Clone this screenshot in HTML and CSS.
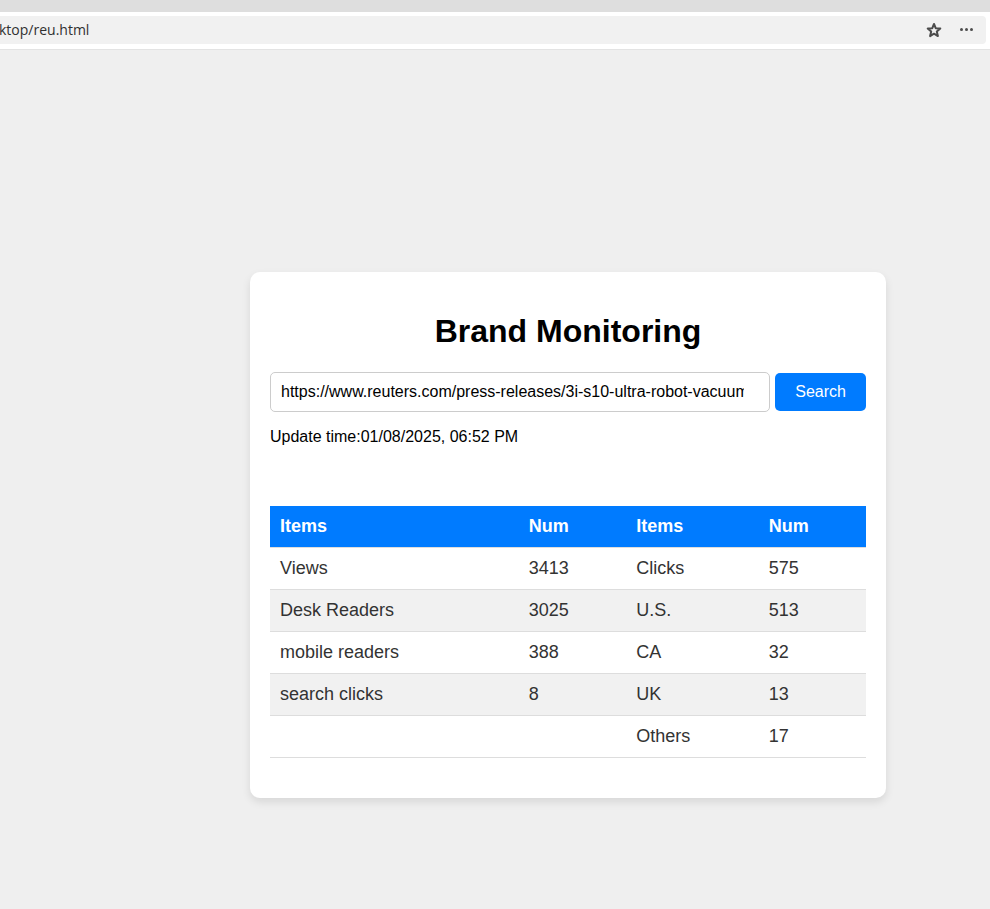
FILE: index.html
```html
<!DOCTYPE html>
<html lang="en">
<head>
  <meta charset="utf-8">
  <title>Brand Monitoring</title>
  <link rel="stylesheet" href="styles.css">
</head>
<body>
  <div class="tab-strip"></div>
  <header class="toolbar">
    <div class="address">
      <span class="address-text">ktop/reu.html</span>
      <button class="icon-button" type="button" aria-label="Add to favorites">
        <svg width="18" height="18" viewBox="0 0 18 18"><path d="M9 3l1.7 4.2 4.6.4-3.5 3 1.1 4.5L9 12.700l-3.900 2.400 1.100-4.500-3.500-3 4.600-.4z" fill="none" stroke="#4c4c4c" stroke-width="2" stroke-linejoin="round"/></svg>
      </button>
      <button class="icon-button" type="button" aria-label="More">
        <svg width="18" height="18" viewBox="0 0 18 18" fill="#4c4c4c"><circle cx="3.500" cy="8.500" r="1.500"/><circle cx="8.500" cy="8.500" r="1.500"/><circle cx="13.500" cy="8.500" r="1.500"/></svg>
      </button>
    </div>
  </header>
  <main class="page">
    <section class="card">
      <h1 class="title">Brand Monitoring</h1>
      <form class="search">
        <input class="search-input" type="text" aria-label="Press release URL" value="https://www.reuters.com/press-releases/3i-s10-ultra-robot-vacuum">
        <button class="search-button" type="button">Search</button>
      </form>
      <p class="updated">Update time:01/08/2025, 06:52 PM</p>
      <table class="stats">
        <thead>
          <tr><th>Items</th><th>Num</th><th>Items</th><th>Num</th></tr>
        </thead>
        <tbody>
          <tr><td>Views</td><td>3413</td><td>Clicks</td><td>575</td></tr>
          <tr><td>Desk Readers</td><td>3025</td><td>U.S.</td><td>513</td></tr>
          <tr><td>mobile readers</td><td>388</td><td>CA</td><td>32</td></tr>
          <tr><td>search clicks</td><td>8</td><td>UK</td><td>13</td></tr>
          <tr><td></td><td></td><td>Others</td><td>17</td></tr>
        </tbody>
      </table>
    </section>
  </main>
</body>
</html>
```
FILE: styles.css
```css
* {
  box-sizing: border-box;
}

body {
  display: flex;
  flex-direction: column;
  min-height: 100vh;
  margin: 0;
  background: #efefef;
  color: #000;
  font-family: "Liberation Sans", Arial, sans-serif;
  font-size: 16px;
}

.tab-strip {
  height: 12px;
  background: #dedede;
}

.toolbar {
  padding: 4px 4px 5px 0;
  background: #fff;
  border-bottom: 1px solid #e3e3e3;
}

.address {
  display: flex;
  align-items: center;
  gap: 15px;
  height: 28px;
  padding-right: 10px;
  background: #f1f1f1;
  border-radius: 0 4px 4px 0;
}

.address-text {
  flex: 1;
  margin-left: -1px;
  padding-bottom: 2px;
  color: #303030;
  font-family: "Open Sans", sans-serif;
  font-size: 14px;
}

.icon-button {
  display: flex;
  padding: 0;
  border: 0;
  background: none;
}

.page {
  padding: 222px 104px 40px 250px;
}

.card {
  padding: 20px 20px 40px;
  background: #fff;
  border-radius: 10px;
  box-shadow: 0 4px 8px rgba(0, 0, 0, 0.1);
}

.title {
  margin: 20px 0 22px;
  font-size: 32px;
  line-height: 38px;
  text-align: center;
}

.search {
  display: flex;
  align-items: center;
  gap: 5px;
}

.search-input {
  flex: 1;
  min-width: 0;
  height: 40px;
  padding: 0 25px 0 10px;
  border: 1px solid #ccc;
  border-radius: 5px;
  background: #fff;
  color: #000;
  font: inherit;
}

.search-button {
  height: 38px;
  padding: 0 20px;
  border: 0;
  border-radius: 5px;
  background: #007bff;
  color: #fff;
  font: inherit;
}

.updated {
  margin: 16px 0 60px;
  line-height: 18px;
}

.stats {
  width: 100%;
  border-collapse: collapse;
  color: #333;
  font-size: 18px;
  line-height: 21px;
  text-align: left;
}

.stats th,
.stats td {
  padding: 10px;
  border-bottom: 1px solid #ddd;
}

.stats th {
  background: #007bff;
  color: #fff;
}

.stats tbody tr:nth-child(even) {
  background: #f1f1f1;
}
```
